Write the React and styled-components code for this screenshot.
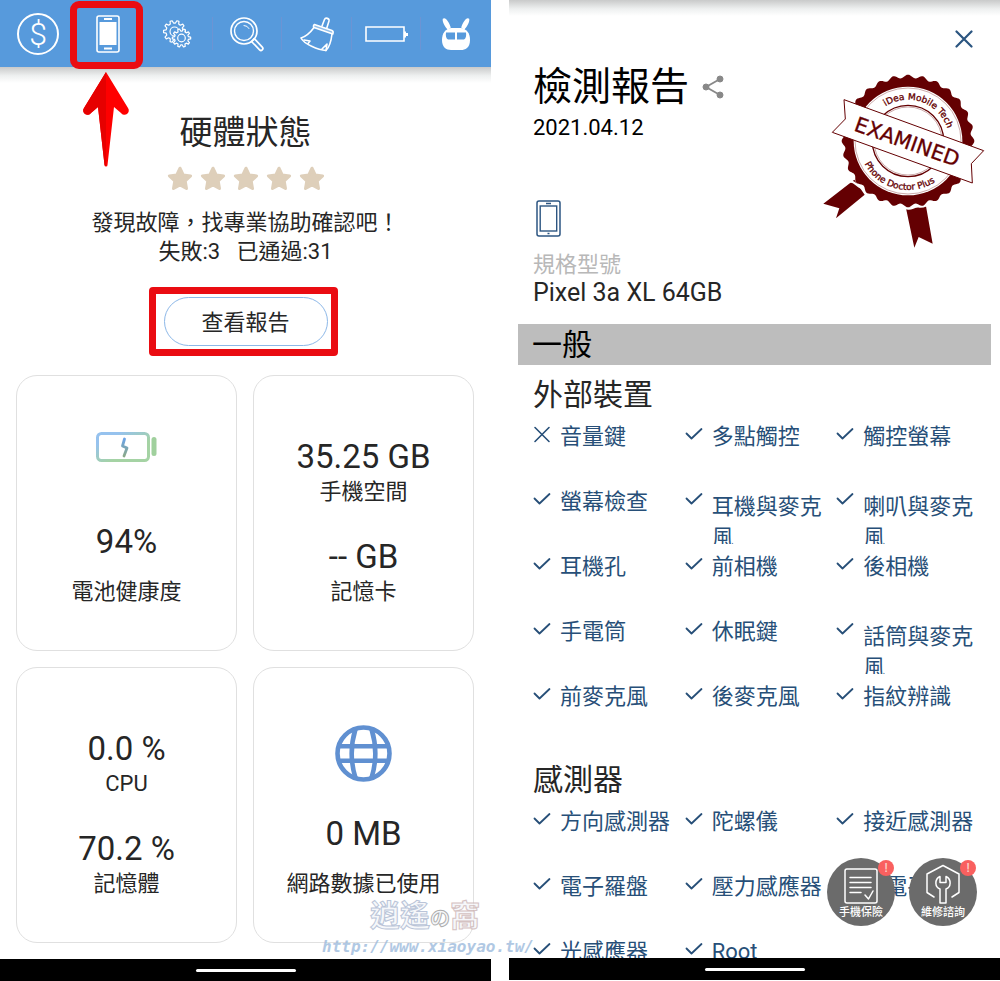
import React from "react";
import styled, { createGlobalStyle, css } from "styled-components";

const GlobalStyle = createGlobalStyle`
  * { box-sizing: border-box; }
  body {
    margin: 0;
    background: #fff;
    color: #262626;
    font-family: Roboto, "Noto Sans CJK TC", sans-serif;
  }
  h1, h2, h3, p, ul, dl, dd, dt { margin: 0; padding: 0; font-weight: 400; }
  button { font: inherit; color: inherit; background: none; border: 0; padding: 0; cursor: pointer; }
`;

const Page = styled.div`
  position: relative;
  display: grid;
  grid-template-columns: minmax(0, 1fr) minmax(0, 1fr);
  gap: 18px;
  height: 100vh;
  overflow: hidden;
`;

const Phone = styled.section`
  display: flex;
  flex-direction: column;
  min-height: 0;
  padding-bottom: ${(p) => p.$bottom || 0}px;
`;

const Screen = styled.div`
  position: relative;
  flex: 1;
  min-height: 0;
  overflow: hidden;
`;

const SystemBar = styled.div`
  display: flex;
  justify-content: center;
  align-items: center;
  flex: none;
  height: 22px;
  background: #000;
  &::after {
    content: "";
    width: 100px;
    height: 3px;
    border-radius: 2px;
    background: #fff;
  }
`;

const ShadowStrip = styled.div`
  height: 16px;
  background: linear-gradient(#c9caca, #eef0f0 55%, #fff);
`;

/* Hardware status */

const Toolbar = styled.nav`
  display: grid;
  grid-template-columns: repeat(7, minmax(0, 1fr));
  align-items: center;
  height: 67px;
  padding-left: 4px;
  background: #579adc;
`;

const Tab = styled.button`
  position: relative;
  display: flex;
  align-items: center;
  justify-content: center;
  height: 33px;
  color: #fff;
  border-right: ${(p) => (p.$last ? "0" : "1px solid #6c94d4")};
  svg { display: block; overflow: visible; flex: none; }
`;

const Highlight = styled.span`
  position: absolute;
  border: 7px solid #ea0c12;
  border-radius: ${(p) => p.$radius}px;
  inset: ${(p) => p.$inset};
  pointer-events: none;
`;

const Pointer = styled.svg`
  position: absolute;
  top: 54px;
  left: 7px;
  z-index: 2;
`;

const Summary = styled.header`
  display: flex;
  flex-direction: column;
  align-items: center;
  padding-top: 26px;
`;

const StatusTitle = styled.h1`
  font-size: 33px;
  line-height: 48px;
`;

const Stars = styled.div`
  display: flex;
  gap: 7px;
  margin-top: 9px;
`;

const SummaryText = styled.p`
  margin-top: 16px;
  font-size: 22px;
  line-height: 29px;
  text-align: center;
  white-space: pre;
`;

const ReportButton = styled.button`
  position: relative;
  width: 164px;
  height: 49px;
  margin: 31px 0 29px;
  padding-bottom: 4px;
  border: 1px solid #8db8e8;
  border-radius: 25px;
  font-size: 22px;
`;

const Cards = styled.div`
  display: grid;
  grid-template-columns: repeat(2, minmax(0, 1fr));
  gap: 16px;
  padding: 0 17px 0 16px;
`;

const Card = styled.article`
  display: flex;
  flex-direction: column;
  justify-content: flex-end;
  align-items: center;
  height: 276px;
  padding-bottom: 43px;
  border: 1px solid #e0e0e0;
  border-radius: 21px;
`;

const CardIcon = styled.div`
  display: flex;
  align-items: center;
  height: 60px;
  margin-bottom: ${(p) => p.$space}px;
`;

const Stat = styled.dl`
  display: flex;
  flex-direction: column;
  align-items: center;
  gap: ${(p) => (p.$loose ? 15 : 0)}px;
  & + & { margin-top: 30px; }
`;

const StatValue = styled.dd`
  font-size: 33px;
  line-height: 40px;
`;

const StatLabel = styled.dt`
  order: 2;
  font-size: 22px;
  line-height: 30px;
`;

/* Report */

const CloseButton = styled.button`
  display: block;
  margin: 14px 27px 0 auto;
  width: 18px;
  height: 18px;
  svg { display: block; }
`;

const ReportHead = styled.header`
  display: flex;
  justify-content: space-between;
  padding: 11px 15px 17px 24px;
`;

const ReportTitle = styled.h1`
  display: flex;
  align-items: center;
  gap: 13px;
  font-size: 39px;
  line-height: 56px;
  color: #000;
  button { height: 24px; }
  svg { display: block; }
`;

const ReportDate = styled.p`
  font-size: 22px;
  line-height: 26px;
  color: #000;
`;

const SealBox = styled.div`
  padding-top: 15px;
  svg { display: block; }
`;

const DeviceIcon = styled.div`
  margin: 59px 0 0 3px;
  height: 38px;
`;

const ModelLabel = styled.p`
  margin-top: 13px;
  font-size: 22px;
  line-height: 28px;
  color: #b8b8b8;
`;

const ModelName = styled.p`
  font-size: 25px;
  line-height: 28px;
`;

const GroupBar = styled.h2`
  margin: 0 9px 11px;
  padding-left: 14px;
  font-size: 30px;
  line-height: 41px;
  color: #000;
  background: #bdbdbd;
`;

const TestGroup = styled.section`
  padding: 0 12px 22px 24px;
`;

const GroupTitle = styled.h3`
  font-size: 30px;
  line-height: 38px;
`;

const TestList = styled.ul`
  display: grid;
  grid-template-columns: repeat(3, minmax(0, 1fr));
  list-style: none;
`;

const TestItem = styled.li`
  display: flex;
  gap: 9px;
  height: 65px;
  overflow: hidden;
  color: #274f78;
  font-size: 22px;
  line-height: 31px;
  svg { flex: none; margin-top: 11px; }
`;

const TestLabel = styled.span`
  padding-top: 7px;
  ${(p) => p.$wrapped && css`padding-top: 12px;`}
`;

const Actions = styled.div`
  position: absolute;
  right: 23px;
  bottom: 32px;
  display: flex;
  gap: 14px;
`;

const ActionButton = styled.button`
  position: relative;
  display: flex;
  flex-direction: column;
  align-items: center;
  gap: 1px;
  width: 68px;
  height: 68px;
  padding-top: 6px;
  border-radius: 50%;
  background: #6b6b6b;
  color: #fff;
  font-size: 11px;
  line-height: 16px;
  font-weight: 500;
  svg { display: block; }
`;

const Alert = styled.span`
  position: absolute;
  top: 2px;
  right: 1px;
  width: 16px;
  height: 16px;
  border-radius: 50%;
  background: #f9605f;
  color: #fbd0c8;
  font-size: 12px;
  text-align: center;
`;

const Watermark = styled.div`
  position: absolute;
  left: 322px;
  bottom: 24px;
  opacity: 0.8;
  pointer-events: none;
`;

const WatermarkName = styled.p`
  padding-left: 48px;
  font-size: 30px;
  line-height: 36px;
  font-weight: 700;
  color: #f4f6fa;
  -webkit-text-stroke: 1px #a9b6cf;
  small { font-size: 20px; -webkit-text-stroke-color: #999; }
  em { font-style: normal; -webkit-text-stroke-color: #cbb3b3; }
`;

const WatermarkUrl = styled.p`
  font: italic 700 16px/20px "DejaVu Sans Mono", monospace;
  color: #9dbbdd;
`;

const stroke = { fill: "none", stroke: "currentColor", strokeLinecap: "round", strokeLinejoin: "round" };

const CoinIcon = () => (
  <svg width="42" height="42" viewBox="0 0 42 42">
    <circle cx="21" cy="21" r="20" fill="none" stroke="#fff" strokeWidth="2" />
    <text x="21" y="32" fontSize="32" fontWeight="300" textAnchor="middle" fill="#fff">$</text>
  </svg>
);

const PhoneTabIcon = () => (
  <svg width="24" height="38" viewBox="0 0 24 38">
    <rect x="1" y="1" width="22" height="36" rx="2" fill="none" stroke="#fff" strokeWidth="1.6" />
    <rect x="3.5" y="7" width="17" height="23" fill="#fff" />
    <path d="M8 4h8M8 33.500h8" stroke="#fff" strokeWidth="2" />
  </svg>
);

function gearPath(cx, cy, inner, outer, teeth) {
  const points = [];
  for (let i = 0; i < teeth; i++) {
    [[-0.32, inner], [-0.16, outer], [0.16, outer], [0.32, inner]].forEach(([shift, r]) => {
      const a = ((i + shift) / teeth) * Math.PI * 2;
      points.push(`${(cx + Math.cos(a) * r).toFixed(2)} ${(cy + Math.sin(a) * r).toFixed(2)}`);
    });
  }
  return `M${points.join("L")}Z`;
}

const GearsIcon = () => (
  <svg width="28" height="28" viewBox="0 0 28 28" {...stroke} strokeWidth="1.2">
    <path d={gearPath(11.5, 11.5, 8.5, 11, 10)} />
    <circle cx="11.500" cy="11.500" r="4.500" />
    <path d={gearPath(18.5, 18, 7, 9.2, 10)} fill="#579adc" />
    <circle cx="18.500" cy="18" r="3.800" />
  </svg>
);

const SearchIcon = () => (
  <svg width="34" height="34" viewBox="0 0 34 34" {...stroke} strokeWidth="1.7">
    <circle cx="14" cy="14" r="13" />
    <circle cx="14" cy="14" r="9.500" strokeWidth="1.4" />
    <path d="M14 8.500a5.500 5.500 0 0 1 5 3" strokeWidth="1" />
    <path d="M21.500 24.500l2.800-2.800 8 8.500a1.800 1.800 0 0 1-2.700 2.600z" />
  </svg>
);

const BroomIcon = () => (
  <svg width="34" height="34" viewBox="0 0 34 34" {...stroke} strokeWidth="1.6">
    <path d="M22 9l2.500-6.500C25.500 0 29.500 1.500 29 4l-2.200 7" />
    <path d="M14.500 7.500l17.500 6c1.300.500 1.300 2 .800 3.500L14 10.500c-1-.500-.500-2.500.500-3z" fill="#fff" fillOpacity="0.35" />
    <path d="M14 10.500C10 16 6 19.500 1 21c3 6 17 12 25 12.500 3-3 5-8 6-16.500" />
    <path d="M4 23l6 1-2 2.500M22 32l5-5-1 6.500" />
  </svg>
);

const BatteryTabIcon = () => (
  <svg width="43" height="16" viewBox="0 0 43 16">
    <path d="M1 1h38v14H1z" fill="none" stroke="#fff" strokeWidth="1.6" />
    <path d="M39 5.500h2v1.500h2v3h-2v1.500h-2z" fill="#fff" />
  </svg>
);

const RabbitIcon = () => (
  <svg width="28" height="34" viewBox="0 0 28 34">
    <g fill="#fff">
      <path d="M.8 1.800C3.500-.5 7 5 8.800 10.500L5.800 13C3 9.500 0 5 .8 1.800zM27.200 1.800C24.500-.5 21 5 19.200 10.500l3 2.500c2.800-3.500 5.800-8 5-11.200z" />
      <path d="M9 11h10c6 1 9 5.500 9 12 0 8-5 10-9 10H9c-5 0-9-3-9-10 0-6.500 3-11 9-12z" />
    </g>
    <path d="M4 15.500h9v7H6c-2-1-2.500-4-2-7zM15 15.500h9c.5 3 0 6-2 7h-7z" fill="#579adc" />
  </svg>
);

const Star = () => (
  <svg width="26" height="26" viewBox="0 0 26 26">
    <path
      d="M13 2.200l3.200 6.700 7.400 1-5.400 5.100 1.300 7.500-6.500-3.600-6.500 3.600 1.300-7.500-5.400-5.100 7.400-1z"
      fill="#decfba" stroke="#decfba" strokeWidth="3" strokeLinejoin="round"
    />
  </svg>
);

const ChargeIcon = () => (
  <svg width="61" height="30" viewBox="0 0 61 30" fill="none">
    <defs>
      <linearGradient id="charge" x1="0" y1="0" x2="1" y2="1">
        <stop offset="0.2" stopColor="#96c2ee" />
        <stop offset="0.65" stopColor="#a5d3a4" />
      </linearGradient>
      <linearGradient id="bolt" x1="0" y1="0" x2="0" y2="1">
        <stop offset="0" stopColor="#6ba3e6" />
        <stop offset="1" stopColor="#8aa989" />
      </linearGradient>
    </defs>
    <rect x="1.500" y="1.500" width="51" height="27" rx="4" stroke="url(#charge)" strokeWidth="3" />
    <path d="M58 7.500v14" stroke="#a0d09d" strokeWidth="5" strokeLinecap="round" />
    <path d="M28.500 7l-2 7 4.500 2-3 8" stroke="url(#bolt)" strokeWidth="2.800" strokeLinejoin="round" strokeLinecap="round" />
  </svg>
);

const GlobeIcon = () => (
  <svg width="57" height="57" viewBox="0 0 57 57" fill="none" stroke="#6090d1" strokeWidth="4.600">
    <circle cx="28.500" cy="28.500" r="26" />
    <path d="M4 21.300h49M4 35.700h49M20.500 4c-5 16-5 33 0 49M36.500 4c5 16 5 33 0 49" />
  </svg>
);

const CloseIcon = () => (
  <svg width="18" height="18" viewBox="0 0 18 18" fill="none" stroke="#2b5580" strokeWidth="2.2" strokeLinecap="round">
    <path d="M1.500 1.500l15 15M16.500 1.500l-15 15" />
  </svg>
);

const FailIcon = () => (
  <svg width="18" height="18" viewBox="0 0 18 18" {...stroke} strokeWidth="1.6">
    <path d="M2 2.500l14 14M16 2.500l-14 14" />
  </svg>
);

const CheckIcon = () => (
  <svg width="18" height="18" viewBox="0 0 18 18" {...stroke} strokeWidth="1.8">
    <path d="M1.500 8.500l5 5L16.500 4" />
  </svg>
);

const ShareIcon = () => (
  <svg width="22" height="24" viewBox="0 0 22 24" fill="#888" stroke="#888">
    <path d="M18 4L4 12l14 8" fill="none" strokeWidth="1.800" />
    <circle cx="18" cy="4" r="3" />
    <circle cx="4" cy="12" r="3" />
    <circle cx="18" cy="20" r="3" />
  </svg>
);

const DeviceOutline = () => (
  <svg width="25" height="37" viewBox="0 0 25 37" fill="none" stroke="#2d5682">
    <rect x="1" y="1" width="23" height="35" rx="2" strokeWidth="1.500" />
    <rect x="4.200" y="6" width="16.500" height="25" strokeWidth="1.400" />
    <path d="M10 3.500h5M11.500 33.500h2" strokeWidth="1.600" />
  </svg>
);

function scallops(cx, cy, r, depth, bumps) {
  const points = [];
  for (let i = 0; i < 360; i++) {
    const a = (i / 180) * Math.PI;
    const d = r + (depth / 2) * Math.cos(a * bumps);
    points.push(`${(cx + Math.cos(a) * d).toFixed(1)} ${(cy + Math.sin(a) * d).toFixed(1)}`);
  }
  return `M${points.join("L")}Z`;
}

const SEAL = "#640002";

const ExaminedSeal = () => (
  <svg width="162" height="174" viewBox="69 223 486 522" fontFamily="'DejaVu Sans', sans-serif" fill={SEAL} role="img" aria-label="Examined">
    <defs>
      <path id="seal-top" d="M200 424a124 124 0 0 1 248 0" />
      <path id="seal-bottom" d="M177 424a147 147 0 0 0 294 0" />
    </defs>
    <path d="M163 540L70 612l48 14-10 30 86-71z" />
    <path d="M318 626l25 118 13-32 42 20-20-112z" />
    <path d="M150 545c20 0 20 20 45 22 0 18 10 20 30 24M316 624c16 10 24-6 40-4 12 4 18-2 34-8" fill="none" stroke="#fff" strokeWidth="7" />
    <path d={scallops(324, 424, 194, 10, 28)} />
    <circle cx="324" cy="424" r="163" fill="#fff" />
    <circle cx="324" cy="424" r="159" fill="none" stroke={SEAL} strokeWidth="1" />
    <circle cx="324" cy="424" r="107" fill="none" stroke={SEAL} strokeWidth="4" />
    <circle cx="324" cy="424" r="102" fill="none" stroke={SEAL} strokeWidth="1" />
    <g fontSize="27" stroke={SEAL} strokeWidth="1">
      <text><textPath href="#seal-top" startOffset="61%" textAnchor="middle">iDea Mobile Tech</textPath></text>
      <text><textPath href="#seal-bottom" startOffset="42%" textAnchor="middle">Phone Doctor Plus</textPath></text>
    </g>
    <path d="M132 300l419 153-37 39 3 58L97 398l39-40z" fill="#fff" stroke={SEAL} strokeWidth="3" />
    <text x="322" y="448" fontSize="62" textAnchor="middle" transform="rotate(19.500 322 425)" stroke={SEAL} strokeWidth="1">
      EXAMINED
    </text>
  </svg>
);

const PolicyIcon = () => (
  <svg width="34" height="40" viewBox="0 0 34 40" {...stroke} strokeWidth="1.500">
    <rect x="1" y="5" width="32" height="34" rx="2" />
    <path d="M6 13.500h21M6 18.500h21M6 23.500h21M6 28.500h11" />
    <path d="M21 31l3.500 4 4.500-8" />
  </svg>
);

const RepairIcon = () => (
  <svg width="34" height="40" viewBox="0 0 34 40" {...stroke} strokeWidth="1.500">
    <path d="M8 33l-7-4.500V10L17 1.500 33 10v18.500L26 33" />
    <path d="M14 12.500v6h6v-6c6 3 5 11 0 12.500V39h-6V25c-5-1.500-6-9.500 0-12.500z" />
  </svg>
);

const tabs = [
  { label: "獎勵", Icon: CoinIcon },
  { label: "硬體", Icon: PhoneTabIcon, marked: true },
  { label: "設定", Icon: GearsIcon },
  { label: "搜尋", Icon: SearchIcon },
  { label: "清理", Icon: BroomIcon },
  { label: "電池", Icon: BatteryTabIcon },
  { label: "助手", Icon: RabbitIcon },
];

const cards = [
  { icon: <ChargeIcon />, space: 45, stats: [["94%", "電池健康度"]] },
  { stats: [["35.25 GB", "手機空間"], ["-- GB", "記憶卡"]] },
  { stats: [["0.0 %", "CPU"], ["70.2 %", "記憶體"]] },
  { icon: <GlobeIcon />, space: 31, stats: [["0 MB", "網路數據已使用"]] },
];

const groups = [
  {
    title: "外部裝置",
    tests: [
      "音量鍵", "多點觸控", "觸控螢幕",
      "螢幕檢查", "耳機與麥克風", "喇叭與麥克風",
      "耳機孔", "前相機", "後相機",
      "手電筒", "休眠鍵", "話筒與麥克風",
      "前麥克風", "後麥克風", "指紋辨識",
    ],
    failed: ["音量鍵"],
  },
  {
    title: "感測器",
    tests: ["方向感測器", "陀螺儀", "接近感測器", "電子羅盤", "壓力感應器", "充電平", "光感應器", "Root"],
    failed: [],
  },
];

function HardwareStatus() {
  return (
    <Phone>
      <Screen>
        <Toolbar>
          {tabs.map(({ label, Icon, marked }, i) => (
            <Tab key={label} aria-label={label} $last={i === tabs.length - 1}>
              <Icon />
              {marked && (
                <>
                  <Highlight $radius={9} $inset="-16px -1px -19px -4px" />
                  <Pointer width="50" height="96" viewBox="0 0 50 96">
                    <path d="M25 1L47 37a4 4 0 0 1-7 5l-7-6-6.500 58a1.500 1.500 0 0 1-3 0L17 36l-7 6a4 4 0 0 1-7-5z" fill="#fe0000" />
                    <path d="M25 1v94a1.500 1.500 0 0 1-1.500-1L17 36l-7 6a4 4 0 0 1-7-5z" fill="#e60000" />
                  </Pointer>
                </>
              )}
            </Tab>
          ))}
        </Toolbar>
        <ShadowStrip />
        <Summary>
          <StatusTitle>硬體狀態</StatusTitle>
          <Stars>{[1, 2, 3, 4, 5].map((n) => <Star key={n} />)}</Stars>
          <SummaryText>{"發現故障，找專業協助確認吧！\n失敗:3   已通過:31"}</SummaryText>
          <ReportButton>
            查看報告
            <Highlight $radius={4} $inset="-11px -11px -11px -16px" />
          </ReportButton>
        </Summary>
        <Cards>
          {cards.map(({ icon, space, stats }) => (
            <Card key={stats[0][1]}>
              {icon && <CardIcon $space={space}>{icon}</CardIcon>}
              {stats.map(([value, label]) => (
                <Stat key={label} $loose={Boolean(icon)}>
                  <StatLabel>{label}</StatLabel>
                  <StatValue>{value}</StatValue>
                </Stat>
              ))}
            </Card>
          ))}
        </Cards>
      </Screen>
      <SystemBar />
    </Phone>
  );
}

function Report() {
  return (
    <Phone $bottom={1}>
      <Screen>
        <ShadowStrip />
        <CloseButton aria-label="關閉"><CloseIcon /></CloseButton>
        <ReportHead>
          <div>
            <ReportTitle>
              檢測報告
              <button aria-label="分享"><ShareIcon /></button>
            </ReportTitle>
            <ReportDate>2021.04.12</ReportDate>
            <DeviceIcon><DeviceOutline /></DeviceIcon>
            <ModelLabel>規格型號</ModelLabel>
            <ModelName>Pixel 3a XL 64GB</ModelName>
          </div>
          <SealBox><ExaminedSeal /></SealBox>
        </ReportHead>
        <GroupBar>一般</GroupBar>
        {groups.map(({ title, tests, failed }) => (
          <TestGroup key={title}>
            <GroupTitle>{title}</GroupTitle>
            <TestList>
              {tests.map((name) => (
                <TestItem key={name}>
                  {failed.includes(name) ? <FailIcon /> : <CheckIcon />}
                  <TestLabel $wrapped={name.length > 5}>{name}</TestLabel>
                </TestItem>
              ))}
            </TestList>
          </TestGroup>
        ))}
        <Actions>
          <ActionButton><PolicyIcon />手機保險<Alert>!</Alert></ActionButton>
          <ActionButton><RepairIcon />維修諮詢<Alert>!</Alert></ActionButton>
        </Actions>
      </Screen>
      <SystemBar />
    </Phone>
  );
}

export default function App() {
  return (
    <>
      <GlobalStyle />
      <Page>
        <HardwareStatus />
        <Report />
        <Watermark>
          <WatermarkName>逍遙<small>の</small><em>窩</em></WatermarkName>
          <WatermarkUrl>http://www.xiaoyao.tw/</WatermarkUrl>
        </Watermark>
      </Page>
    </>
  );
}
